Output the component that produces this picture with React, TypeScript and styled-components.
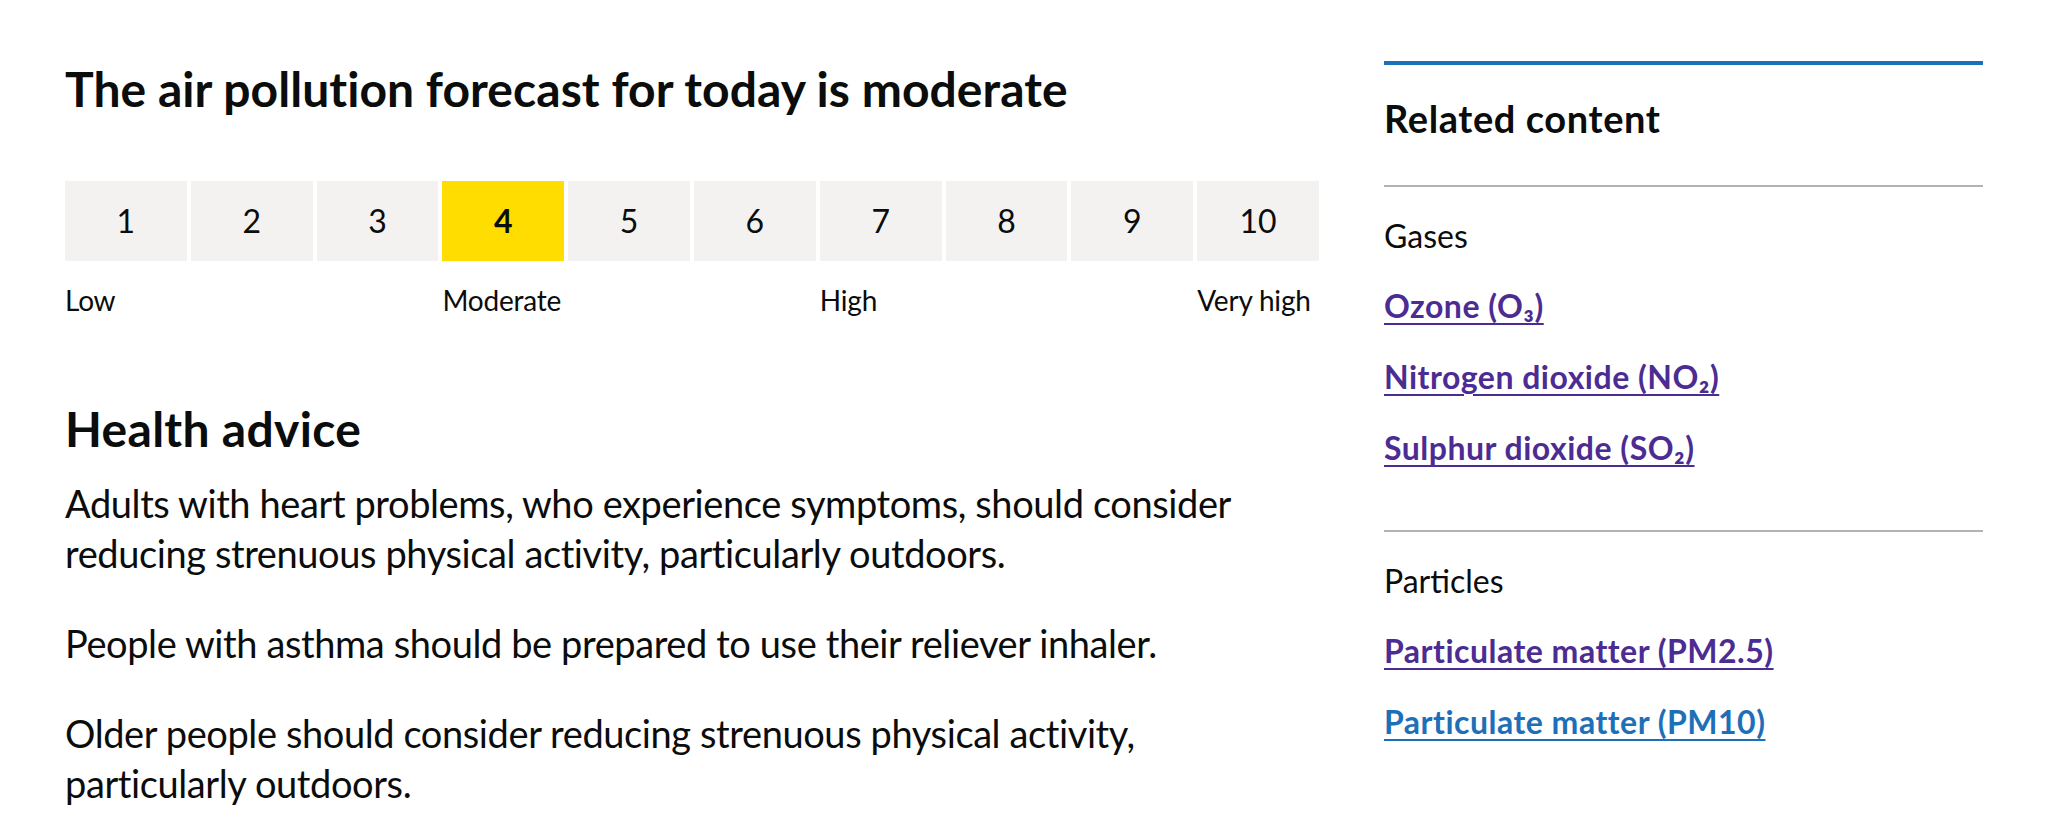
import React from "react";
import styled, { createGlobalStyle } from "styled-components";

const GlobalStyle = createGlobalStyle`
  html, body {
    margin: 0;
    padding: 0;
    background: #ffffff;
  }
  body {
    font-family: Lato, "Noto Sans", Arial, sans-serif;
    color: #0b0c0c;
  }
  * { box-sizing: border-box; }
`;

const Page = styled.div`
  display: grid;
  grid-template-columns: 1254px 599px;
  column-gap: 65px;
  padding: 59px 65px 0 65px;
  align-items: start;
`;

const Main = styled.main`
  display: flex;
  flex-direction: column;
`;

const Title = styled.h1`
  margin: 0;
  font-size: 48px;
  line-height: 60px;
  font-weight: 700;
  letter-spacing: 0.05px;
`;

const Scale = styled.ol`
  list-style: none;
  margin: 62px 0 0 0;
  padding: 0;
  display: grid;
  grid-template-columns: repeat(10, 1fr);
  gap: 4px;
`;

const Cell = styled.li<{ $active?: boolean }>`
  height: 80px;
  display: flex;
  align-items: center;
  justify-content: center;
  background: ${(p) => (p.$active ? "#ffdd00" : "#f3f2f1")};
  font-size: 32px;
  line-height: 40px;
  font-weight: ${(p) => (p.$active ? 700 : 400)};
`;

const Labels = styled.div`
  margin-top: 21px;
  display: grid;
  grid-template-columns: repeat(10, 1fr);
  gap: 4px;
`;

const Label = styled.span<{ $col: number }>`
  grid-column: ${(p) => p.$col} / span 1;
  grid-row: 1;
  font-size: 28px;
  line-height: 36px;
  letter-spacing: -0.2px;
  white-space: nowrap;
`;

const SubHeading = styled.h2`
  margin: 81px 0 19px 0;
  font-size: 48px;
  line-height: 60px;
  font-weight: 700;
  letter-spacing: 0.3px;
`;

const Para = styled.p`
  margin: 0 0 40px 0;
  font-size: 38px;
  line-height: 50px;
  letter-spacing: -0.4px;
  max-width: 1240px;
`;

const Aside = styled.aside`
  margin-top: 2px;
  border-top: 4px solid #1d70b8;
  display: flex;
  flex-direction: column;
`;

const AsideTitle = styled.h2`
  margin: 28px 0 42px 0;
  font-size: 38px;
  line-height: 50px;
  font-weight: 700;
  letter-spacing: 0.6px;
`;

const Group = styled.section<{ $last?: boolean }>`
  border-top: 2px solid #b1b4b6;
  padding-top: 29px;
  padding-bottom: ${(p) => (p.$last ? "0" : "62px")};
`;

const GroupTitle = styled.h3`
  margin: 0 0 30px 0;
  font-size: 32px;
  line-height: 40px;
  font-weight: 400;
`;

const LinkList = styled.ul`
  list-style: none;
  margin: 0;
  padding: 0;
  display: flex;
  flex-direction: column;
  gap: 31px;
`;

const NavLink = styled.a<{ $visited?: boolean }>`
  font-size: 32px;
  line-height: 40px;
  font-weight: 700;
  letter-spacing: 0.5px;
  color: ${(p) => (p.$visited ? "#4c2c92" : "#1d70b8")};
  text-decoration: underline;
  text-decoration-thickness: 2px;
  text-underline-offset: 0.16em;
`;

const levels = [1, 2, 3, 4, 5, 6, 7, 8, 9, 10];
const current = 4;

const labels = [
  { col: 1, text: "Low" },
  { col: 4, text: "Moderate" },
  { col: 7, text: "High" },
  { col: 10, text: "Very high" },
];

const groups = [
  {
    title: "Gases",
    links: [
      { text: "Ozone (O₃)", visited: true },
      { text: "Nitrogen dioxide (NO₂)", visited: true },
      { text: "Sulphur dioxide (SO₂)", visited: true },
    ],
  },
  {
    title: "Particles",
    links: [
      { text: "Particulate matter (PM2.5)", visited: true },
      { text: "Particulate matter (PM10)", visited: false },
    ],
  },
];

export default function App() {
  return (
    <>
      <GlobalStyle />
      <Page>
        <Main>
          <Title>The air pollution forecast for today is moderate</Title>
          <Scale>
            {levels.map((n) => (
              <Cell key={n} $active={n === current}>
                {n}
              </Cell>
            ))}
          </Scale>
          <Labels>
            {labels.map((l) => (
              <Label key={l.text} $col={l.col}>
                {l.text}
              </Label>
            ))}
          </Labels>
          <SubHeading>Health advice</SubHeading>
          <Para>
            Adults with heart problems, who experience symptoms, should consider
            reducing strenuous physical activity, particularly outdoors.
          </Para>
          <Para>People with asthma should be prepared to use their reliever inhaler.</Para>
          <Para>
            Older people should consider reducing strenuous physical activity,
            particularly outdoors.
          </Para>
        </Main>
        <Aside>
          <AsideTitle>Related content</AsideTitle>
          {groups.map((g, i) => (
            <Group key={g.title} $last={i === groups.length - 1}>
              <GroupTitle>{g.title}</GroupTitle>
              <LinkList>
                {g.links.map((l) => (
                  <li key={l.text}>
                    <NavLink href="#" $visited={l.visited}>
                      {l.text}
                    </NavLink>
                  </li>
                ))}
              </LinkList>
            </Group>
          ))}
        </Aside>
      </Page>
    </>
  );
}
